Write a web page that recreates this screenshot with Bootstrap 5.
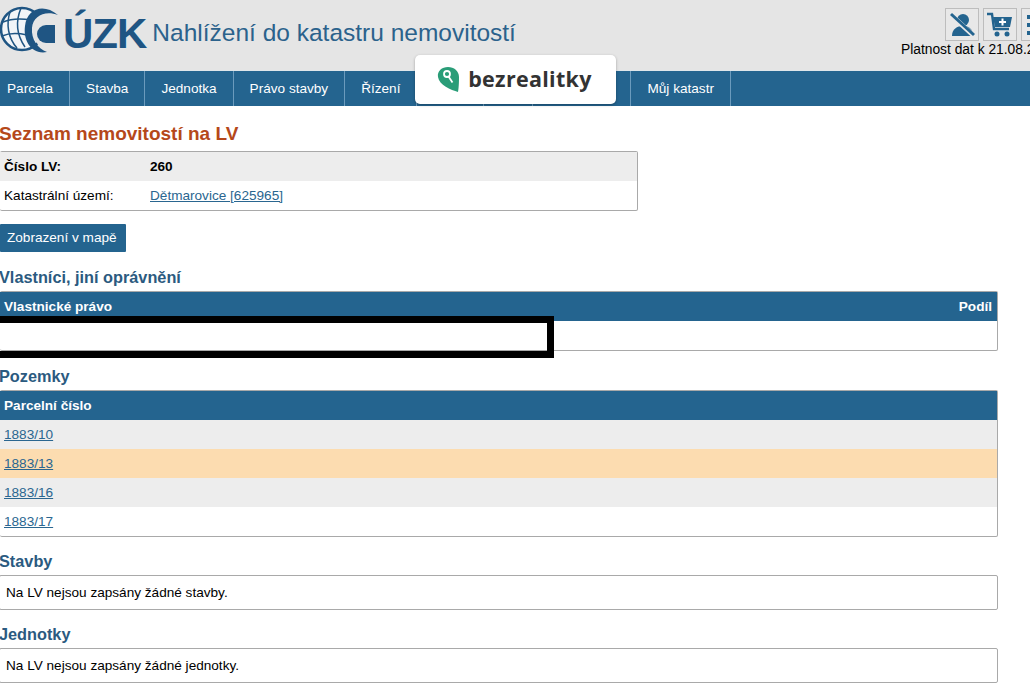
<!DOCTYPE html>
<html lang="cs">
<head>
<meta charset="utf-8">
<title>Nahlížení do katastru nemovitostí</title>
<link href="https://cdn.jsdelivr.net/npm/bootstrap@5.3.0/dist/css/bootstrap.min.css" rel="stylesheet">
<style>
html,body{overflow:hidden;}
body{width:1030px;height:684px;position:relative;font-family:"Liberation Sans",Arial,sans-serif;font-size:13.6px;color:#000;background:#fff;line-height:1.2;}
.topbar{height:71px;background:#e5e5e5;border-bottom:1px solid #dfe6ea;}
.logo-mark{flex:none;}
.brand-word{font-weight:700;font-size:42px;letter-spacing:-1px;color:#1f5583;line-height:1;margin-left:1px;margin-top:13px;}
.site-name{font-size:24.5px;color:#2b628c;margin-left:6px;margin-top:18px;white-space:nowrap;}
.tools{flex:none;margin-left:auto;width:85px;padding-top:8px;}
.tool-btn{width:34px;height:33px;border:1px solid #bdbdbd;background:#e8e8e8;flex:none;}
.valid-date{font-size:13.8px;white-space:nowrap;margin-top:1px;margin-left:-44px;}
.mainnav{height:35px;background:#24648f;margin-left:-9px;}
.mainnav a,.mainnav .nav-blank{display:block;height:35px;line-height:35px;padding:0 16px;color:#fff;text-decoration:none;border-right:1px solid #6b9bbd;white-space:nowrap;}
.blank-a{width:67px}.blank-b{width:49px}.blank-c{width:98px}
.promo{position:absolute;left:415px;top:55px;width:201px;height:49px;background:#fff;border-radius:5px;box-shadow:0 1px 3px rgba(0,0,0,.3);}
.promo-word{font-family:"Open Sans",sans-serif;font-weight:700;font-size:21.5px;color:#333;letter-spacing:.3px;line-height:1;margin-top:-2px;}
.promo-mark{margin-left:-2px;}
.page-title{font-size:19px;font-weight:700;color:#b5481a;margin:0 0 6px -1px;line-height:22px;padding-top:17px;}
.sec-title{font-size:16.300px;font-weight:700;color:#2b5a80;margin:0 0 3px -1px;line-height:21px;}
.data-box{border:1px solid #a9a9a9;border-radius:2px;border-left:0;}
.lv-box{width:638px;}
.wide-box{width:998px;}
.gap-a{margin-bottom:15px;}
.gap-b{margin-bottom:14px;}
.data-row{height:29px;line-height:29px;padding-left:4px;}
.label-col{width:146px;}
.row-grey{background:#ededed;}
.row-hi{background:#fcdcb0;}
.row-head{background:#24648f;color:#fff;font-weight:700;height:29px;line-height:29px;padding:0 5px 0 4px;}
.lk{color:#2a6690;text-decoration:underline;}
.map-btn{display:inline-block;height:28px;line-height:28px;padding:0 9px 0 7px;background:#24648f;color:#fff;border-radius:1px;text-decoration:none;margin:13px 0 15px;}
.msg-box{border:1px solid #a9a9a9;border-radius:2px;width:999px;height:35px;line-height:33px;padding-left:6px;margin-left:-1px;}
.redact{position:absolute;left:-8px;top:316px;width:562px;height:42px;border:7px solid #000;}
</style>
</head>
<body>
<header class="topbar d-flex">
  <div class="d-flex align-items-start">
    <svg class="logo-mark" width="62" height="58" viewBox="0 0 62 58">
      <circle cx="22" cy="29" r="21" fill="#f2f5f8" stroke="#1f5583" stroke-width="2.500"/>
      <g fill="none" stroke="#1f5583" stroke-width="1.500">
        <path d="M3 22C10 19 20 18 31 20"/>
        <path d="M2 36C9 33 18 33 27 35"/>
        <path d="M10 12C6 24 8 38 17 48"/>
        <path d="M21 8C16 20 16 34 25 47"/>
      </g>
      <circle cx="52" cy="30" r="20" fill="#e5e5e5"/>
      <path d="M58 15C44 3 27 8 25 26 23 40 31 55 47 52 38 49 31 39 32 28 33 16 45 10 58 15Z" fill="#1f5583"/>
      <path d="M55 25H46a9 9 0 0 0 0 18H55Z" fill="#1f5583"/>
    </svg>
    <div class="brand-word">ÚZK</div>
    <div class="site-name">Nahlížení do katastru nemovitostí</div>
  </div>
  <div class="tools">
    <div class="d-flex gap-1">
      <div class="tool-btn d-flex align-items-center justify-content-center">
        <svg width="28" height="26" viewBox="0 0 28 26"><circle cx="15" cy="8" r="6" fill="#24648f"/><path d="M4 24c0-7 5-10 11-10s10 3 10 10Z" fill="#24648f"/><path d="M2 2L26 24" stroke="#e8e8e8" stroke-width="5"/><path d="M3 2L26 23" stroke="#24648f" stroke-width="3"/></svg>
      </div>
      <div class="tool-btn d-flex align-items-center justify-content-center">
        <svg width="28" height="27" viewBox="0 0 28 27"><path d="M1 3h5l2 15h15" fill="none" stroke="#24648f" stroke-width="2.4"/><path d="M7 6h19l-2 10H9Z" fill="#24648f"/><path d="M16.500 7.500v7M13 11h7" stroke="#fff" stroke-width="2"/><circle cx="11" cy="23" r="2.500" fill="#24648f"/><circle cx="21" cy="23" r="2.500" fill="#24648f"/></svg>
      </div>
      <div class="tool-btn d-flex align-items-center">
        <svg width="28" height="24" viewBox="0 0 28 24"><path d="M5 4h10M5 12h10M5 20h10" stroke="#24648f" stroke-width="4"/></svg>
      </div>
    </div>
    <div class="valid-date">Platnost dat k 21.08.2025</div>
  </div>
</header>
<nav class="mainnav d-flex">
  <a href="#">Parcela</a><a href="#">Stavba</a><a href="#">Jednotka</a><a href="#">Právo stavby</a><a href="#">Řízení</a>
  <span class="nav-blank blank-a"></span><span class="nav-blank blank-b"></span><span class="nav-blank blank-c"></span>
  <a href="#">Můj katastr</a>
</nav>
<div class="promo d-flex align-items-center justify-content-center gap-2">
  <svg class="promo-mark" width="23" height="27" viewBox="0 0 23 27"><path d="M11 1c6 0 11 4 11 10 0 3 0 10-1 15C14 24 2 19 1 11 0 5 5 1 11 1Z" fill="#2a9d78"/><circle cx="10" cy="8" r="3" fill="none" stroke="#fff" stroke-width="1.800"/><path d="M11.500 10.500l4 6" stroke="#fff" stroke-width="1.800"/></svg>
  <span class="promo-word">bezrealitky</span>
</div>
<main>
  <h1 class="page-title">Seznam nemovitostí na LV</h1>
  <div class="data-box lv-box">
    <div class="data-row row-grey d-flex fw-bold"><div class="label-col">Číslo LV:</div><div>260</div></div>
    <div class="data-row d-flex"><div class="label-col">Katastrální území:</div><div><a class="lk" href="#">Dětmarovice [625965]</a></div></div>
  </div>
  <a class="map-btn" href="#">Zobrazení v mapě</a>
  <h2 class="sec-title">Vlastníci, jiní oprávnění</h2>
  <div class="data-box wide-box gap-a">
    <div class="row-head d-flex justify-content-between"><span>Vlastnické právo</span><span>Podíl</span></div>
    <div class="data-row"></div>
  </div>
  <h2 class="sec-title">Pozemky</h2>
  <div class="data-box wide-box gap-b">
    <div class="row-head">Parcelní číslo</div>
    <div class="data-row row-grey"><a class="lk" href="#">1883/10</a></div>
    <div class="data-row row-hi"><a class="lk" href="#">1883/13</a></div>
    <div class="data-row row-grey"><a class="lk" href="#">1883/16</a></div>
    <div class="data-row"><a class="lk" href="#">1883/17</a></div>
  </div>
  <h2 class="sec-title">Stavby</h2>
  <div class="msg-box gap-b">Na LV nejsou zapsány žádné stavby.</div>
  <h2 class="sec-title">Jednotky</h2>
  <div class="msg-box">Na LV nejsou zapsány žádné jednotky.</div>
</main>
<div class="redact"></div>
<script src="https://cdn.jsdelivr.net/npm/bootstrap@5.3.0/dist/js/bootstrap.bundle.min.js"></script>
</body>
</html>
